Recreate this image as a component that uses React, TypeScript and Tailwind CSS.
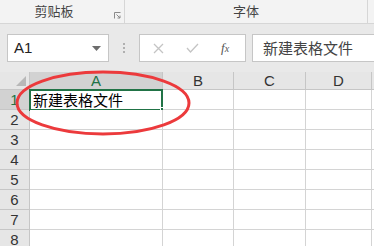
import React from "react";

const cols = [
  { k: "A", w: "w-[133px]" },
  { k: "B", w: "w-[71px]" },
  { k: "C", w: "w-[72px]" },
  { k: "D", w: "w-[66px]" },
];

const rows = [1, 2, 3, 4, 5, 6, 7, 8];

export default function App() {
  return (
    <div
      className="relative w-[374px] h-[246px] overflow-hidden bg-[#e9e9e9] text-[#333]"
      style={{ fontFamily: '"Liberation Sans", "Noto Sans CJK SC", sans-serif' }}
    >
      {/* ribbon group labels */}
      <div className="flex h-[24px] bg-[#f3f3f3] border-b border-[#d6d6d6]">
        <div className="relative flex w-[125px] items-center justify-center border-r border-[#d6d6d6] pr-[16px]">
          <span className="text-[13px] text-[#444]">剪贴板</span>
          <svg className="absolute left-[114px] top-[12px]" width="7" height="7" viewBox="0 0 7 7">
            <path d="M0.5 6.5V0.5H6.5" fill="none" stroke="#8a8a8a" strokeWidth="1" />
            <path d="M2.5 2.5L6 6M6 3.5V6H3.5" fill="none" stroke="#8a8a8a" strokeWidth="1" />
          </svg>
        </div>
        <div className="flex w-[243px] items-center justify-center border-r border-[#d6d6d6]">
          <span className="text-[13px] text-[#444]">字体</span>
        </div>
      </div>

      {/* name box + formula bar */}
      <div className="flex h-[48px] items-start pt-[10px]">
        <div className="ml-[7px] flex h-[28px] w-[102px] items-center justify-between border border-[#c6c6c6] bg-white pl-[6px] pr-[7px]">
          <span className="text-[15px] text-[#222]">A1</span>
          <svg width="9" height="5" viewBox="0 0 9 5">
            <path d="M0 0H9L4.5 5Z" fill="#6d6d6d" />
          </svg>
        </div>
        <div className="ml-[14px] flex h-[28px] w-[2px] flex-col justify-center gap-[2px]">
          <div className="h-[2px] w-[2px] bg-[#b0b0b0]" />
          <div className="h-[2px] w-[2px] bg-[#b0b0b0]" />
          <div className="h-[2px] w-[2px] bg-[#b0b0b0]" />
        </div>
        <div className="ml-[14px] flex h-[28px] w-[107px] items-center border border-[#c6c6c6] bg-white">
          <svg className="ml-[13px]" width="11" height="11" viewBox="0 0 11 11">
            <path d="M1 1L10 10M10 1L1 10" stroke="#c4c4c4" strokeWidth="1.3" />
          </svg>
          <svg className="ml-[22px]" width="13" height="10" viewBox="0 0 13 10">
            <path d="M1 5L4.5 9L12 1" fill="none" stroke="#c4c4c4" strokeWidth="1.3" />
          </svg>
          <span
            className="ml-[22px] text-[13px] italic text-[#555]"
            style={{ fontFamily: '"Liberation Serif", serif' }}
          >
            f<span className="text-[10px]">x</span>
          </span>
        </div>
        <div className="ml-[6px] flex h-[28px] flex-1 items-center border border-r-0 border-[#c6c6c6] bg-white pl-[10px]">
          <span className="text-[15px] text-[#444]" style={{ fontFamily: '"Noto Sans CJK SC", sans-serif' }}>
            新建表格文件
          </span>
        </div>
      </div>

      {/* grid */}
      <div className="flex flex-col">
        <div className="flex h-[18px]">
          <div className="relative w-[30px] border-r border-b border-[#c6c6c6] bg-[#e6e6e6]">
            <svg className="absolute right-[3px] bottom-[3px]" width="10" height="10" viewBox="0 0 10 10">
              <path d="M10 0V10H0Z" fill="#b8b8b8" />
            </svg>
          </div>
          {cols.map((c) => (
            <div
              key={c.k}
              className={`${c.w} flex items-center justify-center border-r border-b border-[#c6c6c6] text-[15px] leading-none ${
                c.k === "A" ? "bg-[#d2d2d2] text-[#217346]" : "bg-[#e6e6e6] text-[#333]"
              }`}
            >
              {c.k}
            </div>
          ))}
          <div className="flex-1 border-b border-[#c6c6c6] bg-[#e6e6e6]" />
        </div>
        {rows.map((r) => (
          <div key={r} className="flex h-[20px] shrink-0">
            <div
              className={`flex w-[30px] items-center justify-center border-r border-b border-[#c6c6c6] text-[15px] leading-none ${
                r === 1 ? "bg-[#d2d2d2] text-[#217346]" : "bg-[#e6e6e6] text-[#333]"
              }`}
            >
              {r}
            </div>
            {cols.map((c) => (
              <div key={c.k} className={`${c.w} relative flex items-center border-r border-b border-[#d4d4d4] bg-white`}>
                {r === 1 && c.k === "A" && (
                  <>
                    <span
                      className="pl-[3px] text-[15px] leading-none text-black"
                      style={{ fontFamily: '"Noto Sans CJK SC", sans-serif' }}
                    >
                      新建表格文件
                    </span>
                    <div className="absolute -left-[1px] -top-[1px] h-[22px] w-[134px] border-2 border-[#217346]" />
                    <div className="absolute -right-[3px] -bottom-[3px] h-[5px] w-[5px] border border-white bg-[#217346]" />
                  </>
                )}
              </div>
            ))}
            <div className="flex-1 border-b border-[#d4d4d4] bg-white" />
          </div>
        ))}
      </div>

      {/* red ellipse annotation */}
      <svg className="pointer-events-none absolute left-0 top-0" width="374" height="246">
        <ellipse cx="103" cy="103" rx="86" ry="31" fill="none" stroke="#ec3a3c" strokeWidth="3" />
      </svg>
    </div>
  );
}
